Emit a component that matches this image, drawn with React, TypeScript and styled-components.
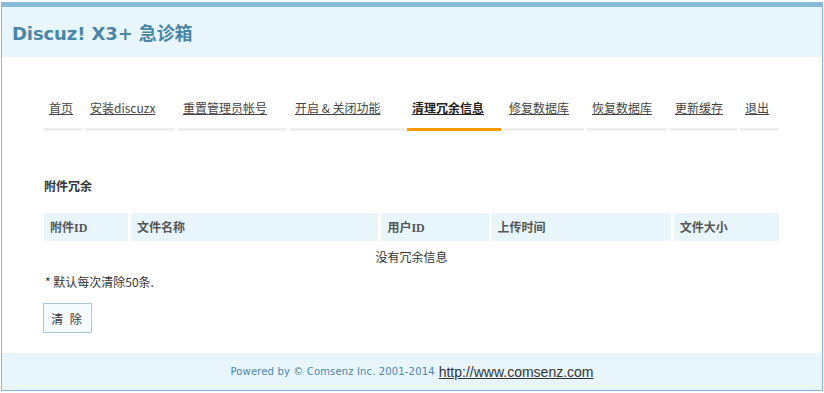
import styled, { createGlobalStyle } from "styled-components";

const GlobalStyle = createGlobalStyle`
  body {
    margin: 0;
    background: #fff;
    font-family: "Noto Sans CJK SC", "Liberation Sans", sans-serif;
    font-size: 12px;
    color: #333;
  }
`;

const Frame = styled.div`
  margin: 2px 1px 0;
  border: 1px solid #86b9d6;
  border-top-width: 5px;
  display: flex;
  flex-direction: column;
`;

const Header = styled.div`
  height: 50px;
  background: #e8f6fc;
  display: flex;
  align-items: center;
  padding-left: 10px;
  h1 {
    margin: 0;
    font-family: "DejaVu Sans", "Noto Sans CJK SC", sans-serif;
    font-size: 18px;
    font-weight: bold;
    color: #4a86a8;
    letter-spacing: -0.1px;
  }
`;

const Main = styled.div`
  padding: 41px 43px 20px 42px;
`;

const Nav = styled.ul`
  list-style: none;
  margin: 0;
  padding: 0;
  display: flex;
  gap: 3px;
`;

const NavItem = styled.li<{ $w: number; $active?: boolean }>`
  width: ${(p) => p.$w}px;
  padding: 0 0 10px 5px;
  box-sizing: border-box;
  border-bottom: 3px solid ${(p) => (p.$active ? "#ff9900" : "#eeeeee")};
  line-height: 20px;
  white-space: nowrap;
  a {
    color: ${(p) => (p.$active ? "#222" : "#444")};
    text-decoration: underline;
    font-weight: ${(p) => (p.$active ? "bold" : "normal")};
  }
`;

const SectionTitle = styled.h3`
  margin: 47px 0 0;
  font-size: 12px;
  font-weight: bold;
  line-height: 16px;
  color: #333;
`;

const Table = styled.table`
  margin: 19px -3px 0;
  width: calc(100% + 6px);
  border-collapse: separate;
  border-spacing: 3px 0;
  table-layout: fixed;
  th {
    background: #e8f6fc;
    height: 28px;
    padding: 0 6px;
    text-align: left;
    font-family: "Liberation Serif", "Noto Sans CJK SC", serif;
    font-size: 12px;
    font-weight: bold;
    color: #555;
  }
  td {
    height: 30px;
    text-align: center;
    padding: 0;
    color: #333;
  }
`;

const Note = styled.p`
  margin: 3px 0 0 1px;
  line-height: 16px;
  color: #333;
`;

const Button = styled.button`
  margin: 13px 0 0 -1px;
  width: 49px;
  height: 30px;
  background: #f5fbfe;
  border: 1px solid #a7c9dd;
  font-family: "Noto Sans CJK SC", sans-serif;
  font-size: 12px;
  color: #333;
  letter-spacing: 2px;
  padding: 0;
`;

const Footer = styled.div`
  height: 37px;
  background: #e8f6fc;
  display: flex;
  align-items: center;
  justify-content: center;
  gap: 4px;
  span {
    font-family: "DejaVu Sans", sans-serif;
    font-size: 10px;
    letter-spacing: 0.15px;
    color: #4a86a8;
  }
  a {
    font-family: "Liberation Sans", sans-serif;
    font-size: 14px;
    color: #333;
    text-decoration: underline;
  }
`;

const navItems = [
  { label: "首页", w: 38 },
  { label: "安装discuzx", w: 90 },
  { label: "重置管理员帐号", w: 109 },
  { label: "开启 & 关闭功能", w: 114 },
  { label: "清理冗余信息", w: 94, active: true },
  { label: "修复数据库", w: 80 },
  { label: "恢复数据库", w: 80 },
  { label: "更新缓存", w: 67 },
  { label: "退出", w: 38 },
];

const columns = [
  { title: "附件ID", w: 84 },
  { title: "文件名称", w: 247 },
  { title: "用户ID", w: 107 },
  { title: "上传时间", w: 179 },
  { title: "文件大小", w: 105 },
];

export default function App() {
  return (
    <>
      <GlobalStyle />
      <Frame>
        <Header>
          <h1>Discuz! X3+ 急诊箱</h1>
        </Header>
        <Main>
          <Nav>
            {navItems.map((item) => (
              <NavItem key={item.label} $w={item.w} $active={item.active}>
                <a href="#">{item.label}</a>
              </NavItem>
            ))}
          </Nav>
          <SectionTitle>附件冗余</SectionTitle>
          <Table>
            <colgroup>
              {columns.map((c) => (
                <col key={c.title} style={{ width: c.w }} />
              ))}
            </colgroup>
            <thead>
              <tr>
                {columns.map((c) => (
                  <th key={c.title}>{c.title}</th>
                ))}
              </tr>
            </thead>
            <tbody>
              <tr>
                <td colSpan={5}>没有冗余信息</td>
              </tr>
            </tbody>
          </Table>
          <Note>* 默认每次清除50条.</Note>
          <Button>清 除</Button>
        </Main>
        <Footer>
          <span>Powered by © Comsenz Inc. 2001-2014</span>
          <a href="#">http://www.comsenz.com</a>
        </Footer>
      </Frame>
    </>
  );
}
